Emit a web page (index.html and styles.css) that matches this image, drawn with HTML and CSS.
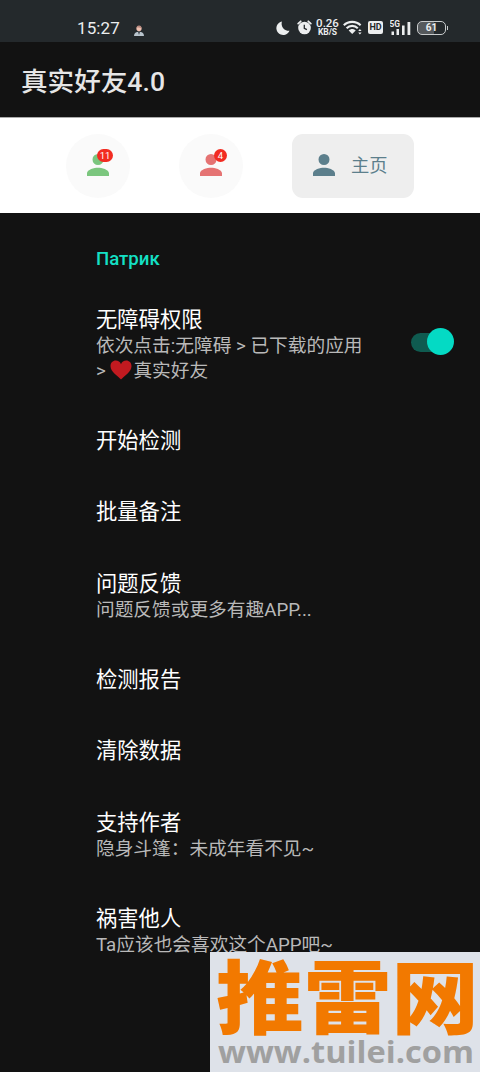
FILE: index.html
```html
<!DOCTYPE html>
<html lang="zh-CN">
<head>
<meta charset="utf-8">
<meta name="viewport" content="width=device-width, initial-scale=1">
<title>真实好友4.0</title>
<link rel="stylesheet" href="styles.css">
</head>
<body>
<div class="screen">
  <div class="status">
    <span class="clock">15:27</span>
    <svg class="notice" width="10" height="11" viewBox="0 0 10 11"><path d="M0 11c0-3 2-4.300 5-4.300s5 1.300 5 4.300z" fill="#b9c4cd"/><circle cx="5" cy="3.600" r="2.600" fill="#efc0b0"/><path d="M2.500 3C2.600 1 4 .3 5.200.5 7 .6 7.600 2 7.400 3.200 6 2.700 4 2 2.500 3z" fill="#b98a80"/><path d="M4 7l1 3 1-3z" fill="#3d4650"/></svg>
    <div class="indicators">
      <svg class="moon" width="14" height="14" viewBox="0 0 14 14"><path d="M6 .5a6.800 6.800 0 1 0 7.500 9.200A7 7 0 0 1 6 .5z" fill="#eceeef"/></svg>
      <svg class="alarm" width="15" height="15" viewBox="0 0 15 15"><circle cx="7.500" cy="8" r="6.300" fill="#eceeef"/><path d="M1.200 3.600l2.500-2.300M13.800 3.600l-2.500-2.300" stroke="#eceeef" stroke-width="1.800" stroke-linecap="round"/><path d="M7.300 4.700v3.700l2.600 1.300" fill="none" stroke="#24282b" stroke-width="1.300"/></svg>
      <div class="speed"><span>0.26</span><span class="unit">KB/S</span></div>
      <svg class="wifi" width="20" height="15" viewBox="0 0 20 15"><g fill="none" stroke="#eceeef" stroke-width="2.100"><path d="M.8 5.300c4.600-4.600 12.200-4.600 16.800 0"/><path d="M3.600 8.200c3.100-3.100 8.100-3.100 11.200 0"/></g><path d="M5.700 10.400c2-2 5-2 7 0L9.200 14z" fill="#eceeef"/><path d="M15.200 11l1.700-2 1.700 2zm0 1.500h3.400l-1.700 2z" fill="#eceeef"/></svg>
      <span class="hd">HD</span>
      <svg class="signal" width="22" height="16" viewBox="0 0 22 16"><text class="net" x="-0.5" y="7.200" textLength="10.500" lengthAdjust="spacingAndGlyphs">5G</text><path d="M1.500 11.500h2.500v3.500h-2.500zM6.500 9H9V15H6.500zM12 5.500h2.600V15H12zM17.500 2h2.800V15h-2.800z" fill="#eceeef"/></svg>
      <span class="battery">61</span>
    </div>
  </div>

  <header class="appbar">真实好友4.0</header>

  <nav class="tabs">
    <div class="tab tab-green">
      <svg class="person" viewBox="4 4 16 16"><path d="M12 12a4 4 0 1 0 0-8 4 4 0 0 0 0 8zm0 2c-2.700 0-8 1.300-8 4v2h16v-2c0-2.700-5.300-4-8-4z"/></svg>
      <span class="badge wide">11</span>
    </div>
    <div class="tab tab-red">
      <svg class="person" viewBox="4 4 16 16"><path d="M12 12a4 4 0 1 0 0-8 4 4 0 0 0 0 8zm0 2c-2.700 0-8 1.300-8 4v2h16v-2c0-2.700-5.300-4-8-4z"/></svg>
      <span class="badge">4</span>
    </div>
    <div class="tab tab-home">
      <svg class="person" viewBox="4 4 16 16"><path d="M12 12a4 4 0 1 0 0-8 4 4 0 0 0 0 8zm0 2c-2.700 0-8 1.300-8 4v2h16v-2c0-2.700-5.300-4-8-4z"/></svg>
      <span class="label">主页</span>
    </div>
  </nav>

  <main class="prefs">
    <h2 class="category">Патрик</h2>
    <div class="row row-switch">
      <div class="text">
        <div class="title">无障碍权限</div>
        <div class="summary">依次点击:无障碍 &gt; 已下载的应用<br>&gt; <svg class="heart" width="22" height="20" viewBox="0 0 22 20"><path d="M11 19.500C8 16 .5 12 .5 6.200.5 2.800 2.900.6 5.700.6 8.200.6 10.200 2 11 4.200 11.800 2 13.800.6 16.300.6c2.800 0 5.200 2.200 5.200 5.600C21.500 12 14 16 11 19.500z" fill="#c11a20"/></svg>真实好友</div>
      </div>
      <div class="switch"><span class="track"></span><span class="thumb"></span></div>
    </div>
    <div class="row"><div class="title">开始检测</div></div>
    <div class="row"><div class="title">批量备注</div></div>
    <div class="row"><div class="title">问题反馈</div><div class="summary">问题反馈或更多有趣APP...</div></div>
    <div class="row"><div class="title">检测报告</div></div>
    <div class="row"><div class="title">清除数据</div></div>
    <div class="row"><div class="title">支持作者</div><div class="summary">隐身斗篷：未成年看不见~</div></div>
    <div class="row"><div class="title">祸害他人</div><div class="summary">Ta应该也会喜欢这个APP吧~</div></div>
  </main>

  <svg class="watermark" width="270" height="120" viewBox="0 0 270 120">
    <text class="brand" x="6" y="75" textLength="263" lengthAdjust="spacingAndGlyphs">推雷网</text>
    <text class="site" x="8" y="111" textLength="256" lengthAdjust="spacingAndGlyphs">www.tuilei.com</text>
  </svg>
</div>
</body>
</html>
```
FILE: styles.css
```css
* { box-sizing: border-box; }
body {
  margin: 0;
  background: #121212;
  font-family: Roboto, "Noto Sans CJK SC", sans-serif;
}
.screen {
  position: relative;
  height: 1072px;
  overflow: hidden;
  background: #121212;
}
.status {
  display: flex;
  align-items: center;
  height: 42px;
  padding: 13px 34px 0 77px;
  background: #24292c;
  color: #eceeef;
}
.clock { width: 45px; font-size: 17px; line-height: 20px; letter-spacing: 0.1px; }
.notice { margin: 5px 0 0 12px; }
.indicators { display: flex; align-items: center; margin-left: auto; }
.moon { margin-right: 7px; }
.alarm { margin-right: 4px; }
.speed {
  display: flex;
  flex-direction: column;
  align-items: center;
  width: 23px;
  margin-right: 4px;
  font-size: 11.500px;
  line-height: 10px;
  font-weight: 500;
}
.unit { font-size: 8.500px; line-height: 9px; font-weight: 700; }
.wifi { margin-right: 5px; }
.hd {
  width: 15px;
  height: 13px;
  margin-right: 7px;
  border-radius: 2px;
  background: #eceeef;
  color: #24292c;
  font-size: 9px;
  line-height: 13px;
  font-weight: 700;
  text-align: center;
}
.signal { margin-right: 5px; }
.net { font-size: 8.500px; font-weight: 700; fill: #eceeef; }
.battery {
  position: relative;
  width: 29px;
  height: 14px;
  border: 1.500px solid #c9cccd;
  border-radius: 5px;
  background: linear-gradient(90deg, #55595c 61%, #24292c 61%);
  font-size: 10px;
  line-height: 12px;
  font-weight: 700;
  text-align: center;
}
.battery::after {
  content: "";
  position: absolute;
  top: 4px;
  right: -3px;
  width: 1px;
  height: 4px;
  background: #c9cccd;
}
.appbar {
  height: 75px;
  padding-left: 21px;
  color: #e6e6e6;
  font-size: 26.600px;
  line-height: 79px;
  font-weight: 500;
}
.tabs {
  display: flex;
  align-items: center;
  gap: 49px;
  height: 96px;
  padding: 0 66px;
  background: #fff;
  border-top: 1px solid #aaa;
}
.tab {
  position: relative;
  display: flex;
  flex-shrink: 0;
  align-items: center;
  justify-content: center;
  width: 64px;
  height: 64px;
  padding: 0 1px 1px 0;
  border-radius: 50%;
  background: #fafafa;
}
.person { width: 22px; height: 22px; fill: currentColor; }
.tab-green { color: #7bc67e; }
.tab-red { color: #e57373; }
.tab-home {
  justify-content: flex-start;
  width: 122px;
  padding-left: 21px;
  border-radius: 11px;
  background: #eeeeee;
  color: #5c7f8c;
}
.label { margin-left: 16px; padding-top: 2px; font-size: 18.300px; line-height: 24px; }
.badge {
  position: absolute;
  left: 35px;
  top: 15px;
  width: 13px;
  height: 13px;
  border-radius: 7px;
  background: #f22c22;
  color: #fff;
  font-size: 9.500px;
  line-height: 13px;
  text-align: center;
}
.badge.wide { left: 31px; width: 16px; }
.prefs { padding: 34px 24px 0 96px; }
.category {
  margin: 0 0 12.700px;
  color: #14e0c5;
  font-size: 18.600px;
  line-height: 24px;
  font-weight: 500;
}
.row { padding: 23px 0; }
.row-switch { display: flex; align-items: center; justify-content: space-between; }
.title { color: #fff; font-size: 21.300px; line-height: 25.400px; }
.summary {
  margin: 2.300px 0 -2.300px;
  color: #b9b9b9;
  font-size: 18.700px;
  line-height: 24.800px;
  white-space: nowrap;
}
.heart { margin-right: 1px; vertical-align: -3px; }
.switch { position: relative; width: 46px; height: 28px; margin-bottom: 4px; }
.track {
  position: absolute;
  left: 1px;
  top: 5px;
  width: 38px;
  height: 19px;
  border-radius: 10px;
  background: #0f5b50;
}
.thumb {
  position: absolute;
  right: 2px;
  top: 0;
  width: 27px;
  height: 27px;
  border-radius: 50%;
  background: #04dac4;
}
.watermark {
  position: absolute;
  right: 0;
  bottom: 0;
  background: #dee2e9;
}
.brand {
  font-family: "Noto Sans CJK SC", sans-serif;
  font-size: 80px;
  font-weight: 900;
  fill: #f27900;
}
.site {
  font-family: "Open Sans", sans-serif;
  font-size: 31px;
  font-weight: 700;
  fill: #a0a0a0;
}
```
